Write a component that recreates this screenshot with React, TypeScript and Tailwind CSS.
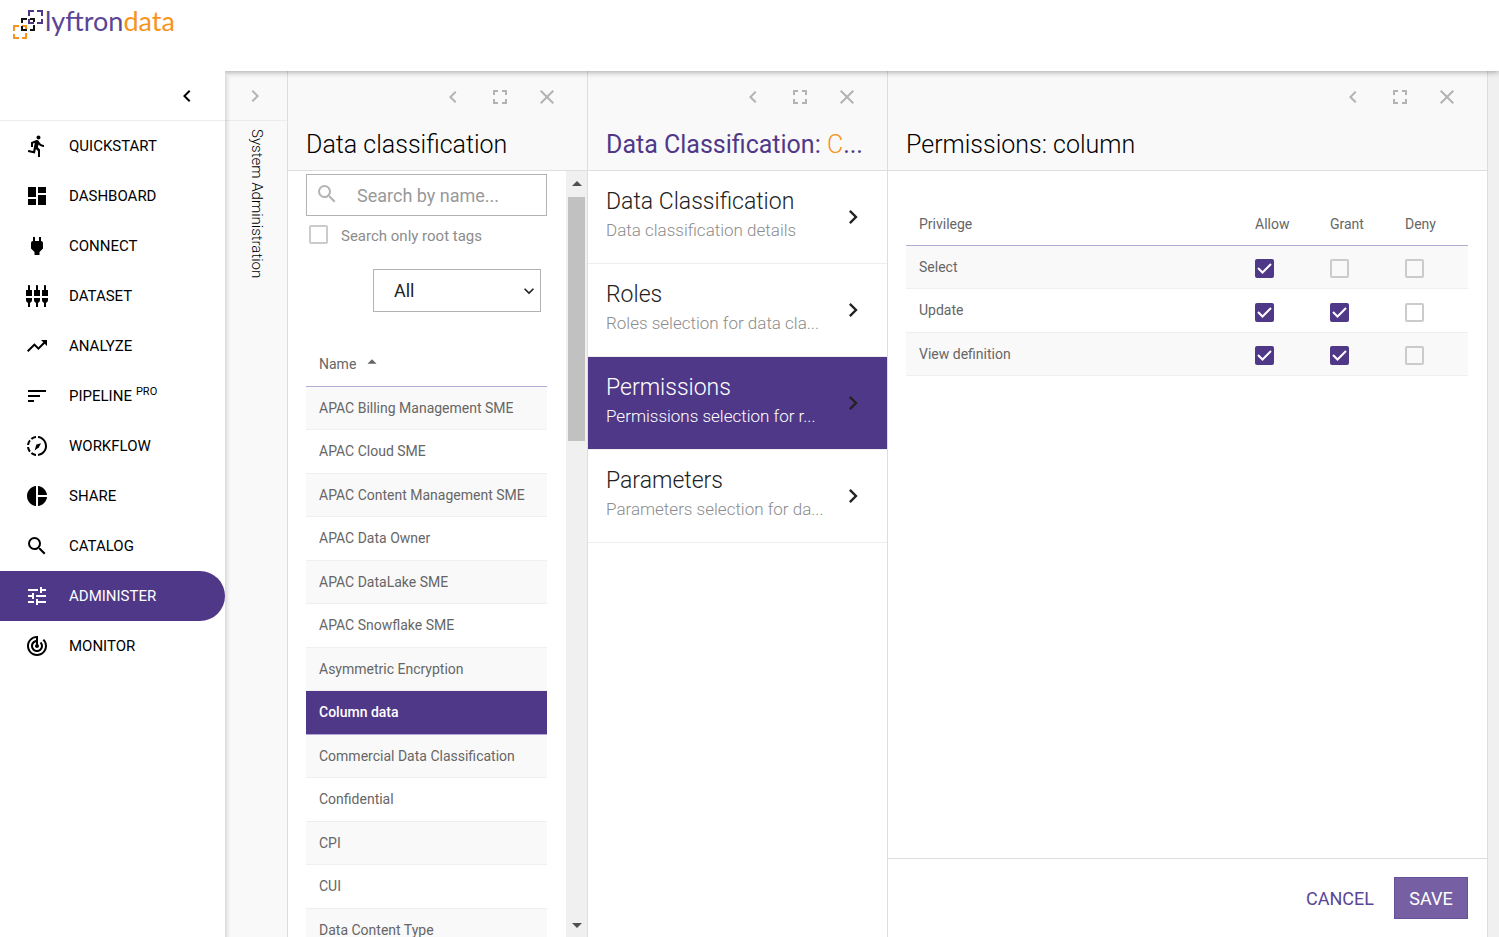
import { type ReactNode } from 'react'
import { clsx } from 'clsx'
import { type IconType } from 'react-icons'
import {
  MdArrowDropDown,
  MdArrowDropUp,
  MdChevronLeft,
  MdChevronRight,
  MdClose,
  MdDashboard,
  MdDirectionsRun,
  MdExpandMore,
  MdFullscreen,
  MdPieChart,
  MdPower,
  MdSearch,
  MdSettingsInputComponent,
  MdSort,
  MdTrackChanges,
  MdTrendingUp,
  MdTune,
} from 'react-icons/md'

function WorkflowIcon({ className }: { className?: string }) {
  return (
    <svg viewBox="0 0 24 24" className={className} fill="currentColor" aria-hidden="true">
      <path d="M13 4.07V2.05C18.05 2.55 22 6.81 22 12s-3.95 9.45-9 9.95v-2.02c3.95-.49 7-3.85 7-7.93s-3.05-7.44-7-7.93z" />
      <path d="M11 2.05v2.02c-1.46.18-2.79.76-3.9 1.62L5.67 4.26C7.17 3.05 9 2.25 11 2.05zM5.69 7.1L4.26 5.68C3.05 7.17 2.25 9 2.05 11h2.02c.18-1.46.76-2.79 1.62-3.9zM4.07 13H2.05c.2 2 1 3.83 2.21 5.33l1.43-1.43C4.83 15.79 4.25 14.46 4.07 13zM5.67 19.74C7.17 20.95 9.01 21.75 11 21.95v-2.02c-1.46-.18-2.79-.76-3.9-1.62l-1.43 1.43z" />
      <path d="M9.6 16.400L11.400 10.600L16 9.200L13.800 13.400z" />
    </svg>
  )
}

type NavItem = {
  label: string
  icon: IconType | typeof WorkflowIcon
  badge?: string
}

const navItems: NavItem[] = [
  { label: 'QUICKSTART', icon: MdDirectionsRun },
  { label: 'DASHBOARD', icon: MdDashboard },
  { label: 'CONNECT', icon: MdPower },
  { label: 'DATASET', icon: MdSettingsInputComponent },
  { label: 'ANALYZE', icon: MdTrendingUp },
  { label: 'PIPELINE', icon: MdSort, badge: 'PRO' },
  { label: 'WORKFLOW', icon: WorkflowIcon },
  { label: 'SHARE', icon: MdPieChart },
  { label: 'CATALOG', icon: MdSearch },
  { label: 'ADMINISTER', icon: MdTune },
  { label: 'MONITOR', icon: MdTrackChanges },
]

const tags = [
  'APAC Billing Management SME',
  'APAC Cloud SME',
  'APAC Content Management SME',
  'APAC Data Owner',
  'APAC DataLake SME',
  'APAC Snowflake SME',
  'Asymmetric Encryption',
  'Column data',
  'Commercial Data Classification',
  'Confidential',
  'CPI',
  'CUI',
  'Data Content Type',
]

const sections = [
  { title: 'Data Classification', text: 'Data classification details' },
  { title: 'Roles', text: 'Roles selection for data cla...' },
  { title: 'Permissions', text: 'Permissions selection for r...' },
  { title: 'Parameters', text: 'Parameters selection for da...' },
]

const privileges = [
  { name: 'Select', allow: true, grant: false, deny: false },
  { name: 'Update', allow: true, grant: true, deny: false },
  { name: 'View definition', allow: true, grant: true, deny: false },
]

function Logo() {
  return (
    <a href="#" aria-label="lyftrondata" className="flex items-start">
      <svg viewBox="0 0 30 30" className="mt-[10px] size-[30px]" fill="none" strokeWidth="2">
        <path stroke="#f7941d" d="M1 21V16H6M9 16H13V20M13 23V28H9M6 28H1V24" />
        <path stroke="#111111" d="M9 13V9H14M17 9H21V12M21 15V20H17M14 20H9V16" />
        <path stroke="#4f3785" d="M16 6V1H21M24 1H29V6M29 9V13H24M21 13H16V9" />
      </svg>
      <span className="mt-[6px] ml-[2px] font-['Lato',sans-serif] text-[27px] leading-[30px] font-normal text-[#5b4596]">
        lyftron<span className="text-[#f7941d]">data</span>
      </span>
    </a>
  )
}

function Checkbox({ id, label, checked }: { id: string; label?: string; checked?: boolean }) {
  return (
    <span className="inline-grid size-[19px] shrink-0">
      <input
        id={id}
        type="checkbox"
        aria-label={label}
        defaultChecked={checked}
        className="peer col-start-1 row-start-1 size-[19px] appearance-none rounded-[2px] border-2 border-[#cbcbcb] checked:border-[#503888] checked:bg-[#503888]"
      />
      <svg
        viewBox="0 0 19 19"
        className="pointer-events-none col-start-1 row-start-1 hidden size-[19px] peer-checked:block"
        fill="none"
        stroke="#ffffff"
        strokeWidth="2"
      >
        <path d="M3 9L7.500 13.500L16 5" />
      </svg>
    </span>
  )
}

function Sidebar() {
  return (
    <aside className="z-20 flex w-[225px] shrink-0 flex-col bg-white shadow-[2px_5px_4px_rgba(0,0,0,0.15)]">
      <div className="flex h-[50px] items-center justify-end border-b border-[#ececf1] pr-[26px]">
        <button aria-label="Collapse menu">
          <MdChevronLeft className="size-6" />
        </button>
      </div>
      <nav>
        {navItems.map(({ label, icon: Icon, badge }) => (
          <a
            key={label}
            href="#"
            className={clsx(
              'flex h-[50px] items-center gap-5 pl-[25px] text-[15px]',
              label === 'ADMINISTER' ? 'rounded-r-full bg-[#503888] text-white' : 'text-black',
            )}
          >
            <Icon className="size-6" />
            <span>
              {label}
              {badge && <sup className="ml-1 text-[11px]">{badge}</sup>}
            </span>
          </a>
        ))}
      </nav>
    </aside>
  )
}

function PanelHeader({ children }: { children: ReactNode }) {
  return (
    <div className="flex h-[100px] shrink-0 flex-col border-b border-[#dedede] bg-[#f9f9f9]">
      <div className="flex h-[51px] items-center justify-end gap-[23px] pr-7 text-[#b3b3b3]">
        <button aria-label="Collapse">
          <MdChevronLeft className="size-6" />
        </button>
        <button aria-label="Full screen">
          <MdFullscreen className="size-6" />
        </button>
        <button aria-label="Close">
          <MdClose className="size-6" />
        </button>
      </div>
      <h2 className="truncate pr-5 pl-[18px] text-[25px] leading-[46px] font-light text-black">
        {children}
      </h2>
    </div>
  )
}

function TagsPanel() {
  return (
    <section className="flex w-[300px] shrink-0 flex-col border-r border-[#dedede] bg-white">
      <PanelHeader>Data classification</PanelHeader>
      <div className="flex min-h-0 flex-1">
        <div className="flex flex-1 flex-col overflow-hidden pt-[3px] pr-[19px] pl-[18px]">
          <label className="flex h-[42px] shrink-0 items-center border border-[#b3b3b3] pl-2">
            <MdSearch className="mb-[2px] size-6 shrink-0 text-[#b3b3b3]" />
            <input
              type="text"
              aria-label="Search by name"
              placeholder="Search by name..."
              className="w-full min-w-0 pl-[18px] text-[18px] outline-none placeholder:text-[#999999]"
            />
          </label>
          <div className="flex h-10 shrink-0 items-center gap-[13px] pl-[3px]">
            <div className="flex pb-1">
              <Checkbox id="root-tags" />
            </div>
            <label htmlFor="root-tags" className="text-[15px] text-[#8c8c8c]">
              Search only root tags
            </label>
          </div>
          <div className="mt-[13px] mr-[6px] grid h-[43px] w-[168px] shrink-0 items-center self-end border border-[#b3b3b3]">
            <select
              aria-label="Tag type"
              className="col-start-1 row-start-1 h-full w-full appearance-none pl-5 text-[18px] text-[#222222]"
            >
              <option>All</option>
            </select>
            <MdExpandMore className="pointer-events-none col-start-1 row-start-1 mr-[1px] size-[20px] justify-self-end text-[#222222]" />
          </div>
          <table className="mt-[31px] w-full text-left text-[14px] text-[#666666]">
            <thead>
              <tr className="h-[43px] border-b border-[#b3abd3]">
                <th className="pt-px pl-[13px] font-normal">
                  <button className="flex items-center gap-[5px]">
                    Name
                    <MdArrowDropUp className="mb-[6px] size-[22px]" />
                  </button>
                </th>
              </tr>
            </thead>
            <tbody>
              {tags.map((tag) => (
                <tr
                  key={tag}
                  className={clsx(
                    'border-b odd:h-[43px] odd:bg-[#f9f9f9] even:h-[44px]',
                    tag === 'Column data'
                      ? 'border-[#b3a4d4] bg-[#503888] font-medium text-white'
                      : 'border-[#efefef]',
                  )}
                >
                  <td className="pt-px pl-[13px]">{tag}</td>
                </tr>
              ))}
            </tbody>
          </table>
        </div>
        {/* Scroll track */}
        <div className="flex w-[21px] flex-col items-center bg-[#f0f0f0] text-[#505050]">
          <MdArrowDropUp className="my-[1px] size-6 shrink-0" />
          <div className="h-[244px] w-[17px] bg-[#c1c1c1]" />
          <MdArrowDropDown className="mt-auto size-6 shrink-0" />
        </div>
      </div>
    </section>
  )
}

function SectionsPanel() {
  return (
    <section className="flex w-[300px] shrink-0 flex-col border-r border-[#dedede] bg-white">
      <PanelHeader>
        <span className="font-normal text-[#503888]">
          Data Classification: <span className="font-light text-[#f7941d]">C</span>...
        </span>
      </PanelHeader>
      <nav>
        {sections.map(({ title, text }) => {
          const active = title === 'Permissions'
          return (
            <a
              key={title}
              href="#"
              className={clsx(
                'flex h-[93px] items-center border-b border-[#eeeeee] pr-[20px] pl-[18px] font-light',
                active ? 'bg-[#503888] text-white' : 'text-[#222222]',
              )}
            >
              <div className="min-w-0 flex-1 pb-1">
                <div className="truncate text-[23px] leading-[30px]">{title}</div>
                <div className={clsx('truncate text-[17px] leading-[26px]', !active && 'text-[#8c8c8c]')}>
                  {text}
                </div>
              </div>
              <MdChevronRight className="size-7 shrink-0 text-[#222222]" />
            </a>
          )
        })}
      </nav>
    </section>
  )
}

function PermissionsPanel() {
  return (
    <section className="flex min-w-0 flex-1 flex-col border-r border-[#dedede] bg-white">
      <PanelHeader>Permissions: column</PanelHeader>
      <div className="flex-1 pt-[30px] pr-[19px] pl-[18px]">
        <table className="w-full table-fixed text-left text-[14px] text-[#666666]">
          <thead>
            <tr className="h-11 border-b border-[#b3abd3]">
              <th className="pt-[3px] pl-[13px] font-normal">Privilege</th>
              <th className="w-[75px] pt-[3px] pl-[13px] font-normal">Allow</th>
              <th className="w-[75px] pt-[3px] pl-[13px] font-normal">Grant</th>
              <th className="w-[76px] pt-[3px] pl-[13px] font-normal">Deny</th>
            </tr>
          </thead>
          <tbody>
            {privileges.map(({ name, allow, grant, deny }) => (
              <tr
                key={name}
                className="border-b border-[#efefef] odd:h-[43px] odd:bg-[#f9f9f9] even:h-[44px]"
              >
                <td className="pt-px pl-[13px]">{name}</td>
                {[allow, grant, deny].map((value, i) => {
                  const column = ['Allow', 'Grant', 'Deny'][i]
                  return (
                    <td key={column} className="pt-1 pl-[13px]">
                      <div className="flex">
                        <Checkbox id={`${name}-${column}`} label={`${column} ${name}`} checked={value} />
                      </div>
                    </td>
                  )
                })}
              </tr>
            ))}
          </tbody>
        </table>
      </div>
      <div className="flex shrink-0 items-center justify-end gap-5 border-t border-[#dedede] py-[18px] pr-[19px] text-[18px]">
        <button className="text-[#5b4596]">CANCEL</button>
        <button className="h-[42px] w-[74px] border border-[#65509a] bg-[#7660a3] text-white">SAVE</button>
      </div>
    </section>
  )
}

export default function App() {
  return (
    <div className="flex h-screen flex-col overflow-hidden bg-[#f0f0f0] font-['Roboto',sans-serif]">
      <header className="z-10 flex h-[71px] shrink-0 items-start bg-white pl-[13px] shadow-[0_1px_6px_rgba(0,0,0,0.35)]">
        <Logo />
      </header>
      <div className="flex min-h-0 flex-1 pr-[11px]">
        <Sidebar />
        <div className="flex w-[63px] shrink-0 flex-col border-r border-[#dedede] bg-[#f9f9f9]">
          <div className="flex h-[50px] items-center border-b border-[#ececec] pl-[18px]">
            <button aria-label="Expand System Administration" className="text-[#b3b3b3]">
              <MdChevronRight className="size-6" />
            </button>
          </div>
          <span className="mt-2 ml-[22px] self-start text-[15px] leading-5 font-light [writing-mode:vertical-rl]">
            System Administration
          </span>
        </div>
        <TagsPanel />
        <SectionsPanel />
        <PermissionsPanel />
      </div>
    </div>
  )
}
